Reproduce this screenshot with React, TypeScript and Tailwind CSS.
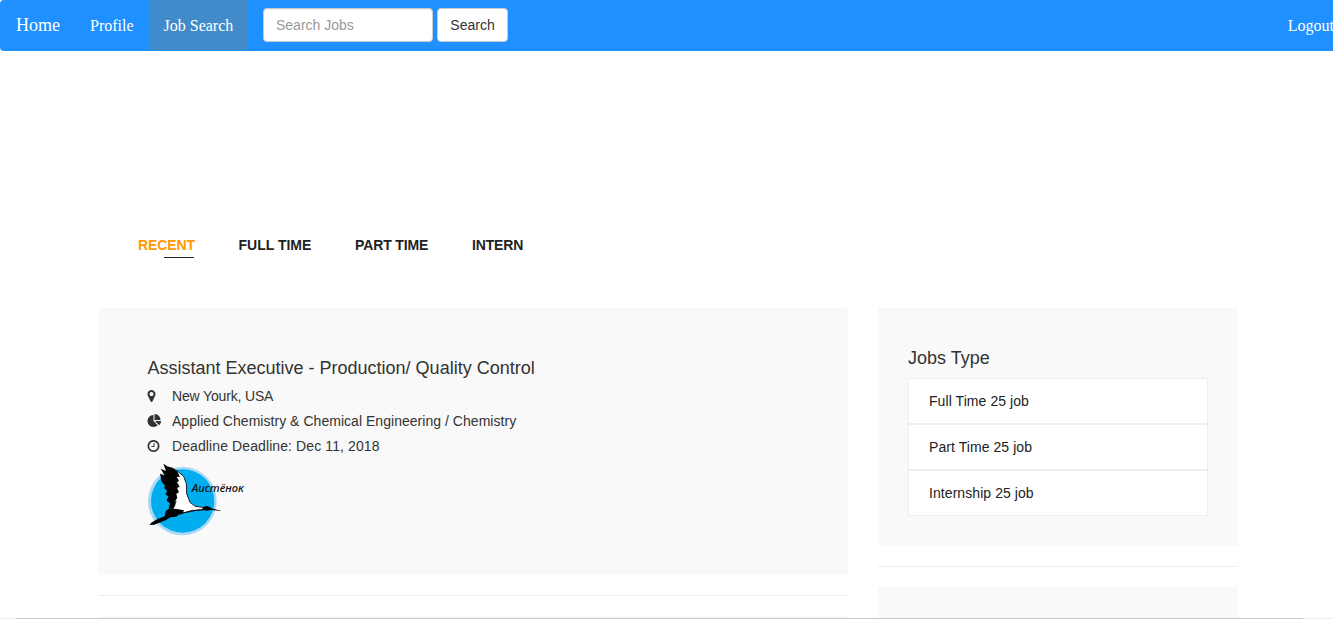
const tabs = [
  { label: "RECENT", style: "flex w-[57px] flex-col text-[#ff9902] tracking-[-0.1px]" },
  { label: "FULL TIME", style: "w-[73px]" },
  { label: "PART TIME", style: "w-[73px] tracking-[-0.12px]" },
  { label: "INTERN", style: "pl-[0.5px] tracking-[-0.15px]" },
];
const jobTypes = ["Full Time 25 job", "Part Time 25 job", "Internship 25 job"];

function MarkerIcon() {
  return (
    <svg className="h-[14px] w-[9px]" viewBox="-64 0 1152 1792" fill="currentColor">
      <path d="M768 640q0-106-75-181t-181-75-181 75-75 181 75 181 181 75 181-75 75-181zm256 0q0 109-33 179l-364 774q-16 33-47.5 52t-67.5 19-67.5-19-46.5-52l-365-774q-33-70-33-179 0-212 150-362t362-150 362 150 150 362z" />
    </svg>
  );
}

function PieIcon() {
  return (
    <svg className="h-[14px] w-[15px]" viewBox="-64 0 1920 1792" fill="currentColor">
      <path d="M768 890l546 546q-106 108-247.5 168t-298.5 60q-209 0-385.5-103t-279.5-279.5-103-385.5 103-385.5 279.5-279.5 385.5-103v762zm187 6h773q0 157-60 298.5t-168 247.5zm709-128h-768v-768q209 0 385.5 103t279.5 279.5 103 385.5z" />
    </svg>
  );
}

function ClockIcon() {
  return (
    <svg className="h-[14px] w-[13px]" viewBox="64 0 1664 1792" fill="currentColor">
      <path d="M1024 544v448q0 14-9 23t-23 9h-320q-14 0-23-9t-9-23v-64q0-14 9-23t23-9h224v-352q0-14 9-23t23-9h64q14 0 23 9t9 23zm416 352q0-148-73-273t-198-198-273-73-273 73-198 198-73 273 73 273 198 198 273 73 273-73 198-198 73-273zm224 0q0 209-103 385.5t-279.5 279.5-385.5 103-385.5-103-279.5-279.5-103-385.5 103-385.5 279.5-279.5 385.5-103 385.5 103 279.5 279.5 103 385.5z" />
    </svg>
  );
}

const details = [
  { icon: <MarkerIcon />, text: "New Yourk, USA", spacing: "tracking-[-0.16px]" },
  { icon: <PieIcon />, text: "Applied Chemistry & Chemical Engineering / Chemistry", spacing: "tracking-[0.035px]" },
  { icon: <ClockIcon />, text: "Deadline Deadline: Dec 11, 2018", spacing: "tracking-[0.1px]" },
];

function StorkLogo() {
  return (
    <svg className="h-[74px] w-[97px]" viewBox="24 24 291 222">
      <circle cx="127" cy="138" r="103" fill="#a9d8f5" />
      <circle cx="128" cy="138" r="95" fill="#00adef" />
      <path d="M84 36 L112 48 L131 64 L139 86 L140 116 L150 142 L166 154 L188 157 L203 161 L182 166 L157 166 L134 173 L110 181 L84 184 L98 162 L108 140 Z" fill="#fff" stroke="#000" strokeWidth="2.5" />
      <path d="M70 26 L84 35 L98 38 L112 49 L120 66 L110 65 L117 78 L111 82 L119 95 L111 99 L117 112 L109 116 L112 130 L104 136 L106 151 L98 163 L86 159 L90 145 L80 137 L85 124 L76 118 L82 108 L72 99 L75 92 L65 80 L60 56 L75 62 L62 41 L78 48 Z" fill="#000" />
      <path d="M132 166 L110 162 L88 160 L77 169 L74 184 L51 193 L34 203 L28 210 L43 209 L78 195 L91 187 L109 185 L116 178 L128 175 Z" fill="#000" />
      <path d="M186 160 Q192 153 202 153 Q210 155 214 160 L246 168 L214 165 L203 166 Q192 167 186 160 Z" fill="#000" />
      <path d="M123 174 Q157 170 177 164 L207 165" fill="none" stroke="#000" strokeWidth="2.5" />
      <text x="155" y="111.5" textLength="157" lengthAdjust="spacingAndGlyphs" fill="#111" className="font-['Noto_Sans',sans-serif] text-[32px] font-medium italic">
        Аистёнок
      </text>
    </svg>
  );
}

export default function App() {
  return (
    <div className="flex h-[619px] w-full flex-col overflow-hidden bg-white font-['Liberation_Sans',Arial,sans-serif] text-sm leading-5 text-[#333]">
      <nav className="flex h-[51px] shrink-0 items-start overflow-hidden rounded-l bg-[#1e90ff] font-['Liberation_Serif','Times_New_Roman',serif] text-base text-white">
        <a className="w-[75px] shrink-0 pt-[15px] pl-4 text-lg leading-5">Home</a>
        <a className="w-[74px] shrink-0 pt-4 pl-[15px] leading-5">Profile</a>
        <a className="h-[50px] w-[99px] shrink-0 bg-[#428bca] pt-4 pl-[14.5px] leading-5">Job Search</a>
        <form className="mt-2 ml-[15px] flex gap-1 font-['Liberation_Sans',Arial,sans-serif] text-sm">
          <input
            className="h-[34px] w-[170px] rounded border border-[#ccc] bg-white px-3 py-1.5 text-[#555] shadow-[inset_0_1px_1px_rgba(0,0,0,0.075)] placeholder:text-[#999]"
            placeholder="Search Jobs"
          />
          <button type="button" className="h-[34px] w-[71px] rounded border border-[#ccc] bg-white text-[#333]">
            Search
          </button>
        </form>
        <a className="-mr-4 ml-auto shrink-0 pt-4 pr-[15px] leading-5">Logout</a>
      </nav>

      <div className="mt-[184px] ml-[138px] flex h-[73px] shrink-0 gap-[43.5px] font-bold whitespace-nowrap text-[#222]">
        {tabs.map((tab, i) => (
          <a key={tab.label} className={tab.style}>
            {tab.label}
            {i === 0 && <span className="mt-[2px] mr-px h-px w-[30px] self-end bg-[#222]" />}
          </a>
        ))}
      </div>

      <div className="ml-[98px] flex h-[310px] shrink-0 gap-[30px] overflow-hidden">
        <main className="w-[750px]">
          <section className="h-[267px] rounded bg-[#f9f9f9] pt-[50px] pl-[49px]">
            <h4 className="pl-[0.5px] text-lg leading-5">Assistant Executive - Production/ Quality Control</h4>
            <ul className="mt-[5px]">
              {details.map((d) => (
                <li key={d.text} className="flex h-[25px] items-center">
                  <span className="w-[25px]">{d.icon}</span>
                  <span className={d.spacing}>{d.text}</span>
                </li>
              ))}
            </ul>
            <div className="mt-[5px] ml-px">
              <StorkLogo />
            </div>
          </section>
          <hr className="my-5 border-[#eee]" />
          <section className="h-20 rounded bg-[#f9f9f9]" />
        </main>
        <aside className="w-[360px]">
          <section className="h-[238px] bg-[#f9f9f9] px-[30px] pt-10">
            <h4 className="text-lg leading-5">Jobs Type</h4>
            <ul className="mt-[10px] tracking-[0.07px] text-[#222]">
              {jobTypes.map((type) => (
                <li key={type} className="h-[46px] border border-[#eee] bg-white px-5 py-3">
                  {type}
                </li>
              ))}
            </ul>
          </section>
          <hr className="my-5 border-[#eee]" />
          <section className="h-20 bg-[#f9f9f9]" />
        </aside>
      </div>
      <div className="h-px shrink-0 bg-[#eee] pr-[30px] pl-4">
        <div className="h-px bg-[#c9c9c9]" />
      </div>
    </div>
  );
}
